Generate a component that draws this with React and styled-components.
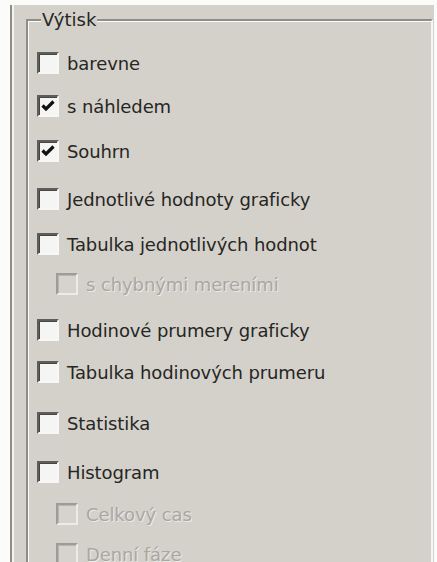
import React from 'react';
import styled, { createGlobalStyle } from 'styled-components';

const GlobalStyle = createGlobalStyle`
    html, body {
        margin: 0;
        padding: 0;
        background: #fbfbfa;
    }
    body {
        font-family: "DejaVu Sans", Tahoma, Verdana, sans-serif;
    }
`;

const Screen = styled.div`
    width: 437px;
    height: 562px;
    overflow: hidden;
    box-sizing: border-box;
    padding: 5px 3px 0 10px;
`;

const Page = styled.div`
    height: 100%;
    box-sizing: border-box;
    background: #d4d1ca;
    border-left: 2px solid #8d8c88;
    box-shadow: inset 2px 0 0 #f4f3f0;
    padding: 4px 1px 0 14px;
`;

const Group = styled.fieldset`
    margin: 0;
    padding: 0 0 40px 0;
    border: 2px solid #8e8d89;
    border-right-color: #f6f6f4;
    border-bottom-color: #f6f6f4;
    box-shadow: inset 1px 1px 0 #fbfbf9;
`;

const Legend = styled.legend`
    margin-left: 13px;
    padding: 0 1px;
    background: #d4d1ca;
    font-size: 18px;
    line-height: 22px;
    color: #262624;
`;

const Row = styled.label`
    display: flex;
    align-items: center;
    gap: 8px;
    height: 22px;
    margin-top: ${props => props.$gap}px;
    padding-left: ${props => (props.$indent ? 28 : 9)}px;
    font-size: 18px;
    letter-spacing: -0.1px;
    color: ${props => (props.$disabled ? '#a9a7a2' : '#262624')};
    text-shadow: ${props => (props.$disabled ? '1px 1px 0 #ebeae6' : 'none')};
    white-space: nowrap;
`;

const Box = styled.span`
    flex: none;
    width: 22px;
    height: 22px;
    box-sizing: border-box;
    border: 2px solid;
    border-color: ${props => (props.$disabled
        ? '#9d9c98 #ecebe7 #ecebe7 #9d9c98'
        : '#5e5d59 #f7f7f5 #f7f7f5 #5e5d59')};
    box-shadow: ${props => (props.$disabled
        ? 'inset 1px 1px 0 #b8b6b1'
        : 'inset 1px 1px 0 #464644')};
    background: ${props => (props.$disabled ? '#d6d3cd' : '#f5f5f3')};
    display: flex;
`;

const Check = () => (
    <svg width="18" height="18" viewBox="0 0 18 18">
        <polyline
            points="3.5,8.5 7,12 14.5,4.5"
            fill="none"
            stroke="#111"
            strokeWidth="3.2"
        />
    </svg>
);

const items = [
    { text: 'barevne', gap: 21 },
    { text: 's náhledem', gap: 21, checked: true },
    { text: 'Souhrn', gap: 23, checked: true },
    { text: 'Jednotlivé hodnoty graficky', gap: 26 },
    { text: 'Tabulka jednotlivých hodnot', gap: 23 },
    { text: 's chybnými mereními', gap: 18, indent: true, disabled: true },
    { text: 'Hodinové prumery graficky', gap: 24 },
    { text: 'Tabulka hodinových prumeru', gap: 20 },
    { text: 'Statistika', gap: 29 },
    { text: 'Histogram', gap: 27 },
    { text: 'Celkový cas', gap: 20, indent: true, disabled: true },
    { text: 'Denní fáze', gap: 18, indent: true, disabled: true },
];

const App = () => (
    <>
        <GlobalStyle />
        <Screen>
            <Page>
                <Group>
                    <Legend>Výtisk</Legend>
                    {items.map(item => (
                        <Row
                            key={item.text}
                            $gap={item.gap}
                            $indent={item.indent}
                            $disabled={item.disabled}
                        >
                            <Box $disabled={item.disabled}>
                                {item.checked && <Check />}
                            </Box>
                            {item.text}
                        </Row>
                    ))}
                </Group>
            </Page>
        </Screen>
    </>
);

export default App;
